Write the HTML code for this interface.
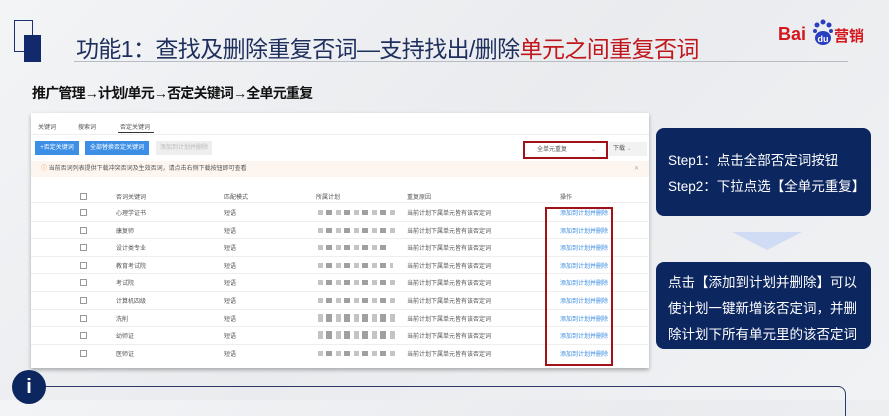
<!DOCTYPE html>
<html><head><meta charset="utf-8"><style>
*{margin:0;padding:0;box-sizing:border-box}
body{width:889px;height:400px;overflow:hidden;position:relative;background:linear-gradient(135deg,#f3f4f6 0%,#e9ebee 50%,#f1f2f4 100%);font-family:"Liberation Sans","Noto Sans CJK SC",sans-serif}
.a{position:absolute}
.sm{font-size:6px;color:#555;white-space:nowrap}
.cb{width:7px;height:7px;border:1px solid #999;background:#fff}
.row{position:absolute;left:0;width:617px;height:17.6px;border-bottom:1px solid #eee}
.lnk{color:#3b8de0}
.blur{height:5px;background:repeating-linear-gradient(90deg,#aaa 0 5px,#fff 5px 8px,#777 8px 14px,#fff 14px 18px);opacity:.7}
.box{position:absolute;left:656px;width:215px;background:#0c2660;border-radius:8px;color:#fff;font-size:13.5px;line-height:26px;padding-left:12px}
</style></head><body>
<div class="a" style="left:14px;top:20px;width:19px;height:32px;border:1.5px solid #1d3170"></div>
<div class="a" style="left:24px;top:35px;width:17px;height:27px;background:#122a6b"></div>
<div class="a" style="left:74px;top:61px;width:774px;height:1px;background:#b8bcc4"></div>
<div class="a" style="left:76px;top:30px;font-size:23px;color:#1e2f5e;white-space:nowrap;letter-spacing:-0.6px">功能1：查找及删除重复否词—支持找出/删除<span style="color:#c0161c">单元之间重复否词</span></div>
<div class="a" style="left:778px;top:24px;font-size:18px;font-weight:bold;color:#d4161d">Bai</div>
<div class="a" style="left:812px;top:18px;width:22px;height:28px;">
<svg width="22" height="28"><circle cx="5" cy="7" r="2.5" fill="#2a3fbf"/><circle cx="11" cy="4" r="2.5" fill="#2a3fbf"/><circle cx="17" cy="7" r="2.5" fill="#2a3fbf"/><circle cx="3" cy="13" r="2" fill="#2a3fbf"/><circle cx="19" cy="13" r="2" fill="#2a3fbf"/><ellipse cx="11" cy="20" rx="8" ry="7" fill="#2a3fbf"/><text x="11" y="24" font-size="9" fill="#fff" text-anchor="middle" font-family="Liberation Sans" font-weight="bold">du</text></svg></div>
<div class="a" style="left:834px;top:25px;font-size:15px;color:#d4161d;font-weight:bold">营销</div>
<div class="a" style="left:32px;top:83px;font-size:14px;font-weight:bold;color:#111;letter-spacing:-0.8px">推广管理→计划/单元→否定关键词→全单元重复</div>

<div class="a" style="left:31px;top:113px;width:618px;height:255px;background:#fff;box-shadow:0 2px 4px rgba(0,0,0,.3)">
 <div class="a sm" style="left:7px;top:9px">关键词</div>
 <div class="a sm" style="left:47px;top:9px">搜索词</div>
 <div class="a sm" style="left:89px;top:9px">否定关键词</div>
 <div class="a" style="left:87px;top:19px;width:36px;height:1px;background:#333"></div>
 <div class="a" style="left:0;top:21px;width:618px;height:1px;background:#eee"></div>
 <div class="a sm" style="left:4px;top:28px;width:44px;height:14px;background:#3d8fe6;color:#fff;line-height:14px;text-align:center">+否定关键词</div>
 <div class="a sm" style="left:54px;top:28px;width:64px;height:14px;background:#3d8fe6;color:#fff;line-height:14px;text-align:center">全部替换否定关键词</div>
 <div class="a sm" style="left:125px;top:28px;width:56px;height:14px;background:#eee;color:#bbb;line-height:14px;text-align:center">添加到计划并删除</div>
 <div class="a sm" style="left:492px;top:28px;width:85px;height:18px;border:2px solid #a01218;line-height:14px;padding-left:12px">全单元重复<span style="position:absolute;right:10px;color:#aaa">⌄</span></div>
 <div class="a sm" style="left:578px;top:29px;width:38px;height:14px;background:#f2f2f2;line-height:14px;padding-left:4px">下载 <span style="color:#aaa">⌄</span></div>
 <div class="a sm" style="left:0;top:48px;width:618px;height:16px;background:#fdf5ef;line-height:16px;padding-left:10px"><span style="color:#e58a3a">ⓘ</span> 当前否词列表提供下载冲突否词及生效否词，请点击右侧下载按钮即可查看<span style="position:absolute;right:10px;color:#aaa">✕</span></div>
 <div class="row" style="top:68px;height:22px"></div>
 <div class="a cb" style="left:49px;top:80px"></div>
 <div class="a sm" style="left:85px;top:79px">否词关键词</div><div class="a sm" style="left:193px;top:79px">匹配模式</div><div class="a sm" style="left:285px;top:79px">所属计划</div><div class="a sm" style="left:376px;top:79px">重复原因</div><div class="a sm" style="left:529px;top:79px">操作</div>
</div>
<div class="a" id="rows" style="left:31px;top:204px">
<div class="row" style="top:0"><div class="a cb" style="left:49px;top:5px"></div><div class="a sm" style="left:85px;top:4px">心理学证书</div><div class="a sm" style="left:193px;top:4px">短语</div><div class="a blur" style="left:287px;top:6px;width:80px"></div><div class="a sm" style="left:376px;top:4px">当前计划下属单元皆有该否定词</div><div class="a sm lnk" style="left:529px;top:4px">添加到计划并删除</div></div>
<div class="row" style="top:17.6px"><div class="a cb" style="left:49px;top:5px"></div><div class="a sm" style="left:85px;top:4px">康复师</div><div class="a sm" style="left:193px;top:4px">短语</div><div class="a blur" style="left:287px;top:6px;width:80px"></div><div class="a sm" style="left:376px;top:4px">当前计划下属单元皆有该否定词</div><div class="a sm lnk" style="left:529px;top:4px">添加到计划并删除</div></div>
<div class="row" style="top:35.2px"><div class="a cb" style="left:49px;top:5px"></div><div class="a sm" style="left:85px;top:4px">设计类专业</div><div class="a sm" style="left:193px;top:4px">短语</div><div class="a blur" style="left:287px;top:6px;width:70px"></div><div class="a sm" style="left:376px;top:4px">当前计划下属单元皆有该否定词</div><div class="a sm lnk" style="left:529px;top:4px">添加到计划并删除</div></div>
<div class="row" style="top:52.8px"><div class="a cb" style="left:49px;top:5px"></div><div class="a sm" style="left:85px;top:4px">教育考试院</div><div class="a sm" style="left:193px;top:4px">短语</div><div class="a blur" style="left:287px;top:6px;width:75px"></div><div class="a sm" style="left:376px;top:4px">当前计划下属单元皆有该否定词</div><div class="a sm lnk" style="left:529px;top:4px">添加到计划并删除</div></div>
<div class="row" style="top:70.4px"><div class="a cb" style="left:49px;top:5px"></div><div class="a sm" style="left:85px;top:4px">考试院</div><div class="a sm" style="left:193px;top:4px">短语</div><div class="a blur" style="left:287px;top:6px;width:80px"></div><div class="a sm" style="left:376px;top:4px">当前计划下属单元皆有该否定词</div><div class="a sm lnk" style="left:529px;top:4px">添加到计划并删除</div></div>
<div class="row" style="top:88px"><div class="a cb" style="left:49px;top:5px"></div><div class="a sm" style="left:85px;top:4px">计算机四级</div><div class="a sm" style="left:193px;top:4px">短语</div><div class="a blur" style="left:287px;top:6px;width:80px"></div><div class="a sm" style="left:376px;top:4px">当前计划下属单元皆有该否定词</div><div class="a sm lnk" style="left:529px;top:4px">添加到计划并删除</div></div>
<div class="row" style="top:105.6px"><div class="a cb" style="left:49px;top:5px"></div><div class="a sm" style="left:85px;top:4px">洗削</div><div class="a sm" style="left:193px;top:4px">短语</div><div class="a blur" style="left:287px;top:4px;width:80px;height:8px"></div><div class="a sm" style="left:376px;top:4px">当前计划下属单元皆有该否定词</div><div class="a sm lnk" style="left:529px;top:4px">添加到计划并删除</div></div>
<div class="row" style="top:123.2px"><div class="a cb" style="left:49px;top:5px"></div><div class="a sm" style="left:85px;top:4px">幼师证</div><div class="a sm" style="left:193px;top:4px">短语</div><div class="a blur" style="left:287px;top:4px;width:80px;height:8px"></div><div class="a sm" style="left:376px;top:4px">当前计划下属单元皆有该否定词</div><div class="a sm lnk" style="left:529px;top:4px">添加到计划并删除</div></div>
<div class="row" style="top:140.8px;border:none"><div class="a cb" style="left:49px;top:5px"></div><div class="a sm" style="left:85px;top:4px">医师证</div><div class="a sm" style="left:193px;top:4px">短语</div><div class="a blur" style="left:287px;top:6px;width:80px"></div><div class="a sm" style="left:376px;top:4px">当前计划下属单元皆有该否定词</div><div class="a sm lnk" style="left:529px;top:4px">添加到计划并删除</div></div>
</div>
<div class="a" style="left:545px;top:207px;width:68px;height:159px;border:2px solid #a01218"></div>

<div class="box" style="top:128px;height:88px;padding-top:20px">Step1：点击全部否定词按钮<br>Step2：下拉点选【全单元重复】</div>
<svg class="a" style="left:732px;top:232px" width="70" height="18"><polygon points="0,0 70,0 35,18" fill="#cfdcf3"/></svg>
<div class="box" style="top:262px;height:87px;padding-top:8px">点击【添加到计划并删除】可以<br>使计划一键新增该否定词，并删<br>除计划下所有单元里的该否定词</div>

<div class="a" style="left:40px;top:386px;width:806px;height:30px;border:1.5px solid #2f3a6a;border-bottom:none;border-left:none;border-radius:0 8px 0 0"></div>
<div class="a" style="left:12px;top:370px;width:34px;height:34px;border-radius:50%;background:#0c2660;color:#fff;font-weight:bold;font-size:20px;text-align:center;line-height:34px">i</div>
</body></html>
